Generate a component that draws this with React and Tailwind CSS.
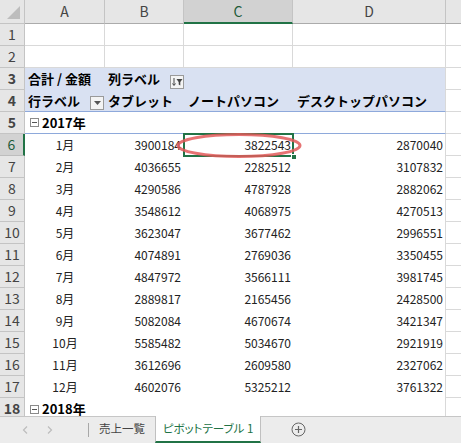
import React from "react";

const months = [
  ["1月", 3900184, 3822543, 2870040],
  ["2月", 4036655, 2282512, 3107832],
  ["3月", 4290586, 4787928, 2882062],
  ["4月", 3548612, 4068975, 4270513],
  ["5月", 3623047, 3677462, 2996551],
  ["6月", 4074891, 2769036, 3350455],
  ["7月", 4847972, 3566111, 3981745],
  ["8月", 2889817, 2165456, 2428500],
  ["9月", 5082084, 4670674, 3421347],
  ["10月", 5585482, 5034670, 2921919],
  ["11月", 3612696, 2609580, 2327062],
  ["12月", 4602076, 5325212, 3761322],
];

function RowHead({ n, sel }) {
  return (
    <div
      className={`w-[25px] shrink-0 flex items-center justify-center text-[14px] border-b ${
        sel
          ? "bg-[#d2d2d2] text-[#1f5c3a] border-r-2 border-r-[#217346] border-b-[#bdbdbd]"
          : "bg-[#e6e6e6] text-[#444] border-r border-[#c4c4c4]"
      }`}
    >
      {n}
    </div>
  );
}

function GridCell({ w }) {
  return <div className={`${w} shrink-0 border-r border-b border-[#d9d9d9]`} />;
}

function Rest() {
  return <div className="flex-1 border-b border-[#d9d9d9]" />;
}

function FilterButton() {
  return (
    <div className="w-[14px] h-[14px] border border-[#9a9a9a] bg-[#f4f4f4] flex items-center justify-center">
      <svg width="11" height="10" viewBox="0 0 11 10">
        <path d="M2 1v7M0.5 6.5L2 8.5L3.5 6.5" stroke="#444" strokeWidth="1" fill="none" />
        <path d="M4.5 2h6L8.3 5v3.5L6.7 7.5V5z" fill="#444" />
      </svg>
    </div>
  );
}

function DropButton() {
  return (
    <div className="w-[14px] h-[14px] border border-[#9a9a9a] bg-[#f4f4f4] flex items-center justify-center">
      <svg width="7" height="4" viewBox="0 0 7 4">
        <path d="M0 0h7L3.5 4z" fill="#555" />
      </svg>
    </div>
  );
}

function MinusBox() {
  return (
    <div className="w-[9px] h-[9px] border border-[#8a8a8a] bg-white flex items-center justify-center mr-[3px]">
      <div className="w-[5px] h-px bg-[#555]" />
    </div>
  );
}

export default function App() {
  return (
    <div className="w-[461px] h-[443px] bg-white overflow-hidden font-['Noto_Sans_CJK_JP','Noto_Sans',sans-serif] text-[#222] select-none">
      <div className="relative h-[416px] overflow-hidden">
        {/* column header */}
        <div className="flex h-[24px] bg-[#e6e6e6] text-[14px] text-[#444]">
          <div className="w-[25px] shrink-0 border-r border-b border-[#c4c4c4] flex items-end justify-end p-[4px]">
            <svg width="13" height="13" viewBox="0 0 13 13">
              <path d="M13 0V13H0z" fill="#bdbdbd" />
            </svg>
          </div>
          <div className="w-[80px] shrink-0 border-r border-b border-[#c4c4c4] border-b-[#ababab] flex items-center justify-center">A</div>
          <div className="w-[79px] shrink-0 border-r border-b border-[#c4c4c4] border-b-[#ababab] flex items-center justify-center">B</div>
          <div className="w-[109px] shrink-0 border-r border-[#c4c4c4] border-b-2 border-b-[#217346] bg-[#d2d2d2] text-[#1f5c3a] flex items-center justify-center">C</div>
          <div className="w-[153px] shrink-0 border-r border-b border-[#c4c4c4] border-b-[#ababab] flex items-center justify-center">D</div>
          <div className="flex-1 border-b border-[#ababab]" />
        </div>

        {/* rows 1-2 */}
        {[1, 2].map((n) => (
          <div key={n} className="flex h-[22px]">
            <RowHead n={n} />
            <GridCell w="w-[80px]" />
            <GridCell w="w-[79px]" />
            <GridCell w="w-[109px]" />
            <GridCell w="w-[153px]" />
            <Rest />
          </div>
        ))}

        {/* row 3 */}
        <div className="flex h-[22px] text-[13px] font-bold text-black">
          <RowHead n={3} />
          <div className="w-[80px] shrink-0 bg-[#d9e1f2] flex items-center pl-[3px] whitespace-nowrap">合計 / 金額</div>
          <div className="w-[79px] shrink-0 bg-[#d9e1f2] flex items-center justify-between pl-[3px] whitespace-nowrap">
            <span>列ラベル</span>
            <div className="self-end mb-[1px]">
              <FilterButton />
            </div>
          </div>
          <div className="w-[109px] shrink-0 bg-[#d9e1f2]" />
          <div className="w-[153px] shrink-0 bg-[#d9e1f2] border-r border-[#d9d9d9]" />
          <Rest />
        </div>

        {/* row 4 */}
        <div className="flex h-[22px] text-[13px] font-bold text-black">
          <RowHead n={4} />
          <div className="w-[80px] shrink-0 bg-[#d9e1f2] border-b border-[#8ea9db] flex items-center justify-between pl-[3px] whitespace-nowrap">
            <span>行ラベル</span>
            <div className="self-end mb-[1px] mr-[1px]">
              <DropButton />
            </div>
          </div>
          <div className="w-[79px] shrink-0 bg-[#d9e1f2] border-b border-[#8ea9db] flex items-center pl-[3px] whitespace-nowrap">タブレット</div>
          <div className="w-[109px] shrink-0 bg-[#d9e1f2] border-b border-[#8ea9db] flex items-center pl-[4px] whitespace-nowrap">ノートパソコン</div>
          <div className="w-[153px] shrink-0 bg-[#d9e1f2] border-b border-[#8ea9db] border-r border-r-[#d9d9d9] flex items-center pl-[4px] whitespace-nowrap">デスクトップパソコン</div>
          <Rest />
        </div>

        {/* row 5 */}
        <div className="flex h-[22px] text-[13px] font-bold text-black">
          <RowHead n={5} />
          <div className="w-[80px] shrink-0 border-b border-[#8ea9db] flex items-center pl-[5px] whitespace-nowrap">
            <MinusBox />
            2017年
          </div>
          <div className="w-[79px] shrink-0 border-b border-[#8ea9db]" />
          <div className="w-[109px] shrink-0 border-b border-[#8ea9db]" />
          <div className="w-[153px] shrink-0 border-b border-[#8ea9db] border-r border-r-[#d9d9d9]" />
          <Rest />
        </div>

        {/* month rows */}
        {months.map(([m, b, c, d], i) => (
          <div key={m} className="flex h-[22px] text-[12px] text-[#222]">
            <RowHead n={i + 6} sel={i === 0} />
            <div className="w-[80px] shrink-0 flex items-center justify-center">{m}</div>
            <div className="w-[79px] shrink-0 flex items-center justify-end pr-[3px]">{b}</div>
            <div className="w-[109px] shrink-0 flex items-center justify-end pr-[2px]">{c}</div>
            <div className="w-[153px] shrink-0 flex items-center justify-end pr-[2px] border-r border-[#d9d9d9]">{d}</div>
            <Rest />
          </div>
        ))}

        {/* row 18 */}
        <div className="flex h-[22px] text-[13px] font-bold text-black">
          <RowHead n={18} />
          <div className="w-[80px] shrink-0 flex items-center pl-[5px] whitespace-nowrap">
            <MinusBox />
            2018年
          </div>
          <div className="w-[79px] shrink-0" />
          <div className="w-[109px] shrink-0" />
          <div className="w-[153px] shrink-0 border-r border-[#d9d9d9]" />
          <Rest />
        </div>

        {/* active cell C6 */}
        <div className="absolute left-[183px] top-[133px] w-[111px] h-[24px] border-2 border-[#217346] pointer-events-none" />
        <div className="absolute left-[291px] top-[154px] w-[6px] h-[6px] bg-[#217346] border border-white pointer-events-none" />

        {/* red annotation ellipse */}
        <svg className="absolute left-[172px] top-[130px] pointer-events-none" width="136" height="32" viewBox="0 0 136 32">
          <ellipse cx="67" cy="15.5" rx="61" ry="11" fill="none" stroke="#e25b5b" strokeOpacity="0.85" strokeWidth="3" />
        </svg>
      </div>

      {/* sheet tabs */}
      <div className="h-[27px] bg-[#ececec] border-t border-[#c6c6c6] flex items-stretch text-[11.5px] [font-feature-settings:'palt']">
        <div className="w-[88px] shrink-0 flex items-center">
          <svg className="ml-[22px]" width="6" height="8" viewBox="0 0 6 8">
            <path d="M5 0.5L1.5 4L5 7.5" stroke="#bdbdbd" strokeWidth="1.2" fill="none" />
          </svg>
          <svg className="ml-[19px]" width="6" height="8" viewBox="0 0 6 8">
            <path d="M1 0.5L4.5 4L1 7.5" stroke="#bdbdbd" strokeWidth="1.2" fill="none" />
          </svg>
        </div>
        <div className="w-px h-[14px] self-center bg-[#a8a8a8]" />
        <div className="w-[66px] shrink-0 flex items-center justify-center text-[#444] pb-[2px]">売上一覧</div>
        <div className="w-[106px] shrink-0 bg-white border-x border-[#c0c0c0] border-b-2 border-b-[#217346] -mt-px flex items-center justify-center text-[#217346]">
          ピボットテーブル 1
        </div>
        <div className="flex items-center pl-[30px] pb-[2px]">
          <svg width="15" height="15" viewBox="0 0 15 15">
            <circle cx="7.5" cy="7.5" r="6.5" fill="none" stroke="#666" strokeWidth="1" />
            <path d="M7.5 4v7M4 7.5h7" stroke="#666" strokeWidth="1.2" />
          </svg>
        </div>
      </div>
    </div>
  );
}
